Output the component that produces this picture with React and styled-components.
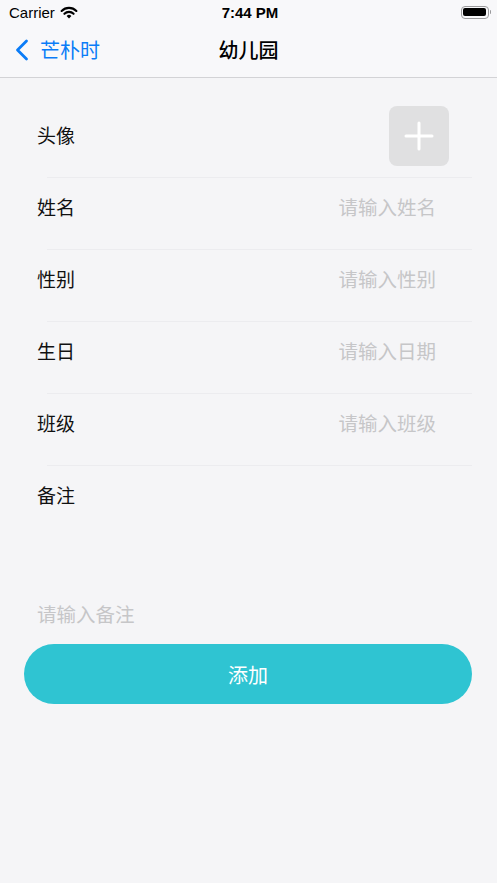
import React from "react";
import styled, { createGlobalStyle } from "styled-components";

const Global = createGlobalStyle`
  html, body { margin: 0; padding: 0; background: #f5f5f7; }
  body { font-family: "Noto Sans CJK SC", "Noto Sans", sans-serif; }
  * { box-sizing: border-box; }
`;

const Screen = styled.div`
  width: 497px;
  height: 883px;
  background: #f5f5f7;
  display: flex;
  flex-direction: column;
  overflow: hidden;
`;

const StatusBar = styled.div`
  height: 26px;
  display: grid;
  grid-template-columns: 1fr auto 1fr;
  align-items: center;
  padding: 0 6px 2px 9px;
  background: #f8f8fa;
  font-family: "Liberation Sans", Arial, sans-serif;
  font-size: 15px;
  color: #000;
`;

const Carrier = styled.div`
  display: flex;
  align-items: center;
  gap: 5px;
`;

const Time = styled.div`
  font-weight: bold;
`;

const BatteryWrap = styled.div`
  justify-self: end;
  display: flex;
  align-items: center;
  gap: 1px;
`;

const BatteryBody = styled.div`
  width: 28px;
  height: 13px;
  border: 1px solid #9a9a9c;
  border-radius: 4px;
  padding: 1.5px;
  display: flex;
`;

const BatteryFill = styled.div`
  flex: 1;
  background: #000;
  border-radius: 2px;
`;

const BatteryTip = styled.div`
  width: 1.5px;
  height: 4px;
  background: #9a9a9c;
  border-radius: 0 1px 1px 0;
`;

const NavBar = styled.div`
  height: 52px;
  display: grid;
  grid-template-columns: 1fr auto 1fr;
  align-items: center;
  background: #f8f8fa;
  border-bottom: 1px solid #d3d3d6;
  padding-bottom: 4px;
`;

const Back = styled.div`
  display: flex;
  align-items: center;
  gap: 11px;
  padding-left: 15px;
  color: #0a7cf7;
  font-size: 20px;
  line-height: 1;
`;

const Title = styled.div`
  font-size: 20px;
  font-weight: 500;
  line-height: 1;
  color: #000;
`;

const Form = styled.div`
  display: flex;
  flex-direction: column;
  padding-top: 28px;
`;

const Row = styled.div`
  display: flex;
  align-items: flex-start;
  justify-content: space-between;
  height: 72px;
  padding-left: 37px;
  padding-right: ${(p) => p.$right}px;
  position: relative;
  &::after {
    content: "";
    position: absolute;
    left: 47px;
    right: 25px;
    bottom: 0;
    height: 1px;
    background: #ececef;
  }
`;

const RowInner = styled.div`
  height: 60px;
  display: flex;
  align-items: center;
  justify-content: space-between;
  flex: 1;
`;

const Label = styled.div`
  font-size: 19px;
  line-height: 1;
  padding-bottom: 3px;
  color: #111;
`;

const Placeholder = styled.div`
  font-size: 19.5px;
  line-height: 1;
  padding-bottom: 3px;
  color: #c6c6c8;
`;

const AvatarBox = styled.div`
  width: 60px;
  height: 60px;
  border-radius: 8px;
  background: #e0e0e1;
  display: flex;
  align-items: center;
  justify-content: center;
`;

const NoteBlock = styled.div`
  display: flex;
  flex-direction: column;
  padding: 0 25px 0 37px;
`;

const NoteLabel = styled.div`
  height: 60px;
  display: flex;
  align-items: center;
`;

const NoteArea = styled.div`
  height: 118px;
  display: flex;
  align-items: flex-end;
  padding-bottom: 18px;
`;

const ButtonWrap = styled.div`
  padding: 0 25px 0 24px;
`;

const AddButton = styled.div`
  height: 60px;
  border-radius: 30px;
  background: #2fc4d2;
  color: #fff;
  font-size: 20px;
  display: flex;
  align-items: center;
  justify-content: center;
`;

const rows = [
  { label: "姓名", ph: "请输入姓名" },
  { label: "性别", ph: "请输入性别" },
  { label: "生日", ph: "请输入日期" },
  { label: "班级", ph: "请输入班级" },
];

export default function App() {
  return (
    <Screen>
      <Global />
      <StatusBar>
        <Carrier>
          Carrier
          <svg width="18" height="13" viewBox="0 0 18 13">
            <path d="M9 12.5 L6.6 10 A3.4 3.4 0 0 1 11.4 10 Z" fill="#000" />
            <path d="M4.4 7.8 A6.5 6.5 0 0 1 13.6 7.8" stroke="#000" strokeWidth="2.1" fill="none" strokeLinecap="round" />
            <path d="M1.6 4.9 A10.5 10.5 0 0 1 16.4 4.9" stroke="#000" strokeWidth="2.1" fill="none" strokeLinecap="round" />
          </svg>
        </Carrier>
        <Time>7:44 PM</Time>
        <BatteryWrap>
          <BatteryBody>
            <BatteryFill />
          </BatteryBody>
          <BatteryTip />
        </BatteryWrap>
      </StatusBar>
      <NavBar>
        <Back>
          <svg width="14" height="22" viewBox="0 0 14 22">
            <path d="M11.5 2 L2.5 11 L11.5 20" stroke="#0a7cf7" strokeWidth="2.8" fill="none" strokeLinecap="round" strokeLinejoin="round" />
          </svg>
          芒朴时
        </Back>
        <Title>幼儿园</Title>
        <div />
      </NavBar>
      <Form>
        <Row $right={48}>
          <RowInner>
            <Label>头像</Label>
            <AvatarBox>
              <svg width="30" height="30" viewBox="0 0 30 30">
                <path d="M15 2 V28 M2 15 H28" stroke="#fff" strokeWidth="3" strokeLinecap="round" />
              </svg>
            </AvatarBox>
          </RowInner>
        </Row>
        {rows.map((r) => (
          <Row key={r.label} $right={61}>
            <RowInner>
              <Label>{r.label}</Label>
              <Placeholder>{r.ph}</Placeholder>
            </RowInner>
          </Row>
        ))}
        <NoteBlock>
          <NoteLabel>
            <Label>备注</Label>
          </NoteLabel>
          <NoteArea>
            <Placeholder>请输入备注</Placeholder>
          </NoteArea>
        </NoteBlock>
        <ButtonWrap>
          <AddButton>添加</AddButton>
        </ButtonWrap>
      </Form>
    </Screen>
  );
}
